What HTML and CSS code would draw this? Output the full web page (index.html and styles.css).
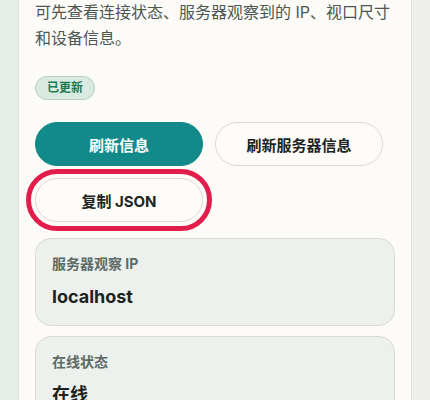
FILE: index.html
```html
<!DOCTYPE html>
<html lang="zh-CN">

<head>
    <meta charset="UTF-8">
    <meta name="viewport" content="width=device-width, initial-scale=1.0">
    <title>连接信息</title>
    <link rel="stylesheet" href="styles.css">
</head>

<body>
    <div class="page">
        <section class="panel">
            <p class="intro">可先查看连接状态、服务器观察到的 IP、视口尺寸和设备信息。</p>

            <span class="badge">已更新</span>

            <div class="actions">
                <button class="btn primary">刷新信息</button>
                <button class="btn">刷新服务器信息</button>
                <button class="btn focused">复制 JSON</button>
            </div>

            <div class="info-list">
                <div class="info">
                    <div class="label">服务器观察 IP</div>
                    <div class="value">localhost</div>
                </div>
                <div class="info">
                    <div class="label">在线状态</div>
                    <div class="value">在线</div>
                </div>
            </div>
        </section>
    </div>
</body>

</html>
```

FILE: styles.css
```css
* {
    margin: 0;
    padding: 0;
    box-sizing: border-box;
}

body {
    font-family: Inter, "Noto Sans CJK SC", sans-serif;
    background: linear-gradient(90deg, #e7eeea 0%, #ecefec 60%, #efefec 100%);
    color: #1d2421;
    height: 400px;
    overflow: hidden;
}

.page {
    padding: 0 18px;
}

.panel {
    background: #fcfbf7;
    border: 1px solid #e3e1da;
    border-top: none;
    padding: 0 16px 40px;
}

.intro {
    font-size: 16px;
    line-height: 25.6px;
    color: #4c5652;
}

.badge {
    display: inline-block;
    margin-top: 25px;
    height: 24px;
    line-height: 22px;
    padding: 0 11px;
    font-size: 12px;
    font-weight: 700;
    color: #1e7a53;
    background: #d9eae1;
    border: 1px solid #b4cfc1;
    border-radius: 999px;
}

.actions {
    display: flex;
    flex-wrap: wrap;
    gap: 12px;
    margin-top: 22px;
}

.btn {
    width: 168px;
    height: 44px;
    font-family: inherit;
    font-size: 15px;
    font-weight: 700;
    color: #1d2421;
    background: #fdfcf9;
    border: 1px solid #dcd9d0;
    border-radius: 999px;
}

.btn.primary {
    color: #fff;
    background: #128a8a;
    border-color: #128a8a;
}

.btn.focused {
    outline: 5px solid #e31d4b;
    outline-offset: 4px;
}

.info-list {
    display: flex;
    flex-direction: column;
    gap: 10px;
    margin-top: 16px;
}

.info {
    background: #edf1ed;
    border: 1px solid #dbdad1;
    border-radius: 16px;
    padding: 16px;
}

.label {
    font-size: 14px;
    line-height: 18px;
    font-weight: 700;
    color: #5e6a65;
}

.value {
    margin-top: 12px;
    font-size: 18px;
    line-height: 24px;
    font-weight: 700;
    color: #1b2320;
}
```
